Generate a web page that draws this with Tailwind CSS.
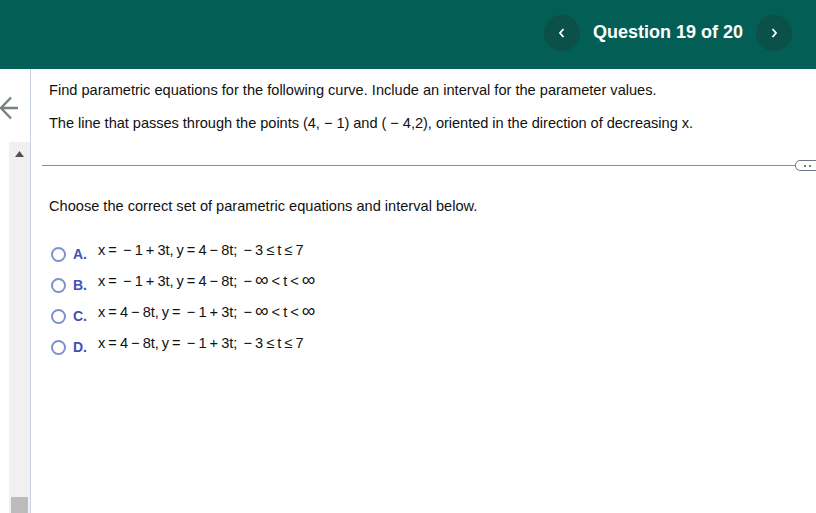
<!DOCTYPE html>
<html lang="en">
<head>
    <meta charset="UTF-8">
    <title>Question 19 of 20</title>
    <script src="https://cdn.jsdelivr.net/npm/@tailwindcss/browser@4"></script>
</head>
<body class="w-[816px] h-[513px] overflow-hidden bg-white font-['Liberation_Sans',Arial,sans-serif] text-[#111]">
    <!-- top bar -->
    <header class="h-[69px] bg-[#035f56] flex items-center justify-end pr-[24px] pb-[4px]">
        <button class="w-[36px] h-[36px] rounded-full bg-[#0b5049] flex items-center justify-center">
            <svg width="8" height="10" viewBox="0 0 8 10" fill="none" stroke="white" stroke-width="1.8"><path d="M5.5 1 L2 5 L5.5 9"/></svg>
        </button>
        <h1 class="w-[176px] text-center text-[18px] font-bold text-white">Question 19 of 20</h1>
        <button class="w-[36px] h-[36px] rounded-full bg-[#0b5049] flex items-center justify-center">
            <svg width="8" height="10" viewBox="0 0 8 10" fill="none" stroke="white" stroke-width="1.8"><path d="M2.5 1 L6 5 L2.5 9"/></svg>
        </button>
    </header>

    <div class="flex h-[444px]">
        <!-- back arrow + scrollbar rail -->
        <aside class="w-[31px] shrink-0 border-r border-[#c9d3e3] flex flex-col">
            <div class="h-[73px] pt-[26px]">
                <svg width="20" height="26" viewBox="0 0 20 26" fill="none" stroke="#7b8080" stroke-width="2.4"><path d="M18 13 H1 M11 2.5 L1 13 L11 23.5"/></svg>
            </div>
            <div class="flex-1 ml-[9px] bg-[#f0f0f0] flex flex-col justify-between">
                <svg class="mt-[9px] ml-[6px]" width="9" height="6" viewBox="0 0 9 6" fill="#505050"><path d="M4.5 0 L9 6 H0 Z"/></svg>
                <div class="h-[16px] mx-[2px] bg-[#bcbcbc]"></div>
            </div>
        </aside>

        <main class="flex-1 min-w-0">
            <div class="pl-[18px] pt-[13px] text-[14.6px] leading-[17px]">
                <p>Find parametric equations for the following curve. Include an interval for the parameter values.</p>
                <p class="mt-[16px] tracking-[-0.04px]">The line that passes through the points (4, − 1) and ( − 4,2), oriented in the direction of decreasing x.</p>
            </div>

            <!-- divider with handle -->
            <div class="relative mt-[33px] ml-[11px] h-px bg-[#8a9099]">
                <div class="absolute left-[753px] top-[-5px] w-[40px] h-[11px] bg-white border border-[#6f7885] rounded-[5px] flex items-center pl-[8px] gap-[3px]">
                    <span class="w-[2px] h-[2px] bg-[#6f7885]"></span>
                    <span class="w-[2px] h-[2px] bg-[#6f7885]"></span>
                </div>
            </div>

            <p class="pl-[18px] mt-[32px] text-[14.6px] leading-[17px]">Choose the correct set of parametric equations and interval below.</p>

            <!-- answer options -->
            <ul class="pl-[20px] mt-[25px] flex flex-col gap-[10px] text-[14.6px] leading-[21px]">
                <li class="flex items-center h-[21px]">
                    <span class="w-[15px] h-[15px] rounded-full border-2 border-[#7d90d0] bg-white mt-[7px]"></span>
                    <b class="w-[32px] pl-[7px] text-[14px] text-[#3f51b5] mt-[7px]">A.</b>
                    <span class="whitespace-pre tracking-[-0.1px] [word-spacing:-0.8px]">x =  − 1 + 3t, y = 4 − 8t;  − 3 ≤ t ≤ 7</span>
                </li>
                <li class="flex items-center h-[21px]">
                    <span class="w-[15px] h-[15px] rounded-full border-2 border-[#7d90d0] bg-white mt-[7px]"></span>
                    <b class="w-[32px] pl-[7px] text-[14px] text-[#3f51b5] mt-[7px]">B.</b>
                    <span class="whitespace-pre tracking-[-0.1px] [word-spacing:-0.8px]">x =  − 1 + 3t, y = 4 − 8t;  − <span class="text-[19px] leading-[0]">∞</span> &lt; t &lt; <span class="text-[19px] leading-[0]">∞</span></span>
                </li>
                <li class="flex items-center h-[21px]">
                    <span class="w-[15px] h-[15px] rounded-full border-2 border-[#7d90d0] bg-white mt-[7px]"></span>
                    <b class="w-[32px] pl-[7px] text-[14px] text-[#3f51b5] mt-[7px]">C.</b>
                    <span class="whitespace-pre tracking-[-0.1px] [word-spacing:-0.8px]">x = 4 − 8t, y =  − 1 + 3t;  − <span class="text-[19px] leading-[0]">∞</span> &lt; t &lt; <span class="text-[19px] leading-[0]">∞</span></span>
                </li>
                <li class="flex items-center h-[21px]">
                    <span class="w-[15px] h-[15px] rounded-full border-2 border-[#7d90d0] bg-white mt-[7px]"></span>
                    <b class="w-[32px] pl-[7px] text-[14px] text-[#3f51b5] mt-[7px]">D.</b>
                    <span class="whitespace-pre tracking-[-0.1px] [word-spacing:-0.8px]">x = 4 − 8t, y =  − 1 + 3t;  − 3 ≤ t ≤ 7</span>
                </li>
            </ul>
        </main>
    </div>
</body>
</html>
